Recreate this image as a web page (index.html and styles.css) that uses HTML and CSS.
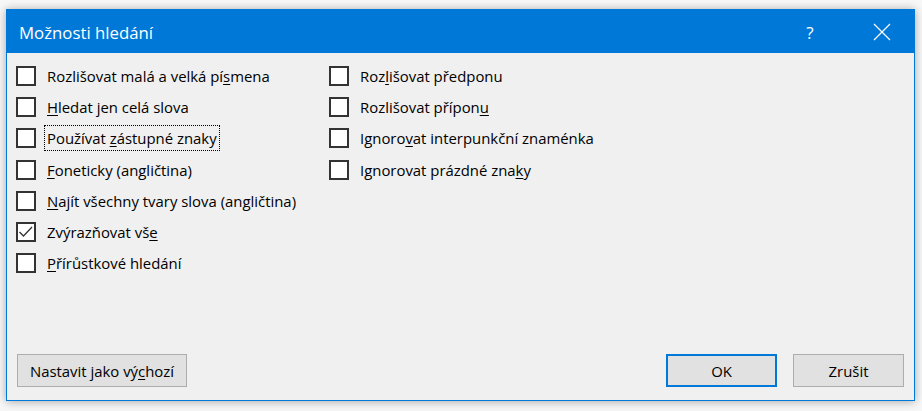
FILE: index.html
```html
<!DOCTYPE html>
<html lang="cs">
<head>
<meta charset="utf-8">
<title>Možnosti hledání</title>
<link rel="stylesheet" href="styles.css">
</head>
<body>
<div class="dialog">
  <div class="titlebar">
    <span class="title">Možnosti hledání</span>
    <span class="help">?</span>
    <span class="close">
      <svg width="18" height="18" viewBox="0 0 18 18"><path d="M1 1 L17 17 M17 1 L1 17" stroke="#fff" stroke-width="1.2" fill="none"/></svg>
    </span>
  </div>
  <div class="content">
    <div class="col col-left">
      <label class="opt"><span class="box"></span><span class="txt">Rozlišovat malá a velká pí<u>s</u>mena</span></label>
      <label class="opt"><span class="box"></span><span class="txt"><u>H</u>ledat jen celá slova</span></label>
      <label class="opt"><span class="box"></span><span class="txt focus">Používat <u>z</u>ástupné znaky</span></label>
      <label class="opt"><span class="box"></span><span class="txt"><u>F</u>oneticky (angličtina)</span></label>
      <label class="opt"><span class="box"></span><span class="txt"><u>N</u>ajít všechny tvary slova (angličtina)</span></label>
      <label class="opt"><span class="box"><svg width="20" height="20" viewBox="0 0 20 20"><path d="M3.5 10 L7.5 14 L16 5" stroke="#333" stroke-width="1.3" fill="none"/></svg></span><span class="txt">Zvýrazňovat vš<u>e</u></span></label>
      <label class="opt"><span class="box"></span><span class="txt"><u>P</u>řírůstkové hledání</span></label>
    </div>
    <div class="col col-right">
      <label class="opt"><span class="box"></span><span class="txt">Roz<u>l</u>išovat předponu</span></label>
      <label class="opt"><span class="box"></span><span class="txt">Rozlišovat přípon<u>u</u></span></label>
      <label class="opt"><span class="box"></span><span class="txt">Ignoro<u>v</u>at interpunkční znaménka</span></label>
      <label class="opt"><span class="box"></span><span class="txt">Ignorovat prázdné zna<u>k</u>y</span></label>
    </div>
  </div>
  <div class="footer">
    <button class="btn btn-default-set">Nastavit jako vý<u>c</u>hozí</button>
    <div class="spacer"></div>
    <button class="btn btn-ok">OK</button>
    <button class="btn btn-cancel">Zrušit</button>
  </div>
</div>
</body>
</html>
```

FILE: styles.css
```css
* { box-sizing: border-box; }
html, body { margin: 0; padding: 0; }
body {
  width: 922px;
  height: 411px;
  background: #f7f7f7;
  padding: 9px 0 0 6px;
  font-family: "Open Sans", "Noto Sans", sans-serif;
  overflow: hidden;
}
.dialog {
  width: 909px;
  height: 392px;
  border: 1px solid #0078d7;
  background: #f0f0f0;
  display: flex;
  flex-direction: column;
  box-shadow: 0 0 8px rgba(0,0,0,0.22), 0 2px 10px rgba(0,0,0,0.12);
}
.titlebar {
  height: 43px;
  background: #0078d7;
  color: #fff;
  display: flex;
  align-items: center;
  padding-left: 12px;
}
.title {
  font-size: 16.8px;
  flex: 1;
  margin-top: 2px;
}
.help {
  font-size: 17px;
  width: 46px;
  text-align: center;
  margin-right: 26px;
  margin-top: 2px;
}
.close {
  width: 46px;
  height: 43px;
  display: flex;
  align-items: center;
  justify-content: center;
  margin-right: 9px;
}
.content {
  flex: 1;
  display: flex;
  padding: 7px 0 0 9px;
}
.col { display: flex; flex-direction: column; }
.col-left { width: 313px; }
.opt {
  height: 31.3px;
  display: flex;
  align-items: center;
  font-size: 14.9px;
  color: #000;
}
.box {
  width: 20px;
  height: 20px;
  border: 2px solid #333;
  background: #fff;
  margin-right: 11px;
  flex: none;
  position: relative;
}
.box svg { position: absolute; left: -2px; top: -2px; }
.txt { white-space: nowrap; line-height: 20px; }
.txt.focus {
  outline: 1px dotted #000;
  outline-offset: 2px;
  padding: 0;
}
u { text-decoration-thickness: 1px; text-underline-offset: 2px; }
.footer {
  height: 46px;
  display: flex;
  align-items: flex-start;
  padding: 0 10px 0 10px;
}
.spacer { flex: 1; }
.btn {
  height: 33px;
  background: #e1e1e1;
  border: 1px solid #adadad;
  font-family: inherit;
  font-size: 14.9px;
  color: #000;
  padding: 0;
  margin: 0;
}
.btn-default-set { width: 170px; }
.btn-ok { width: 111px; border: 2px solid #0078d7; margin-right: 16px; }
.btn-cancel { width: 111px; }
```
